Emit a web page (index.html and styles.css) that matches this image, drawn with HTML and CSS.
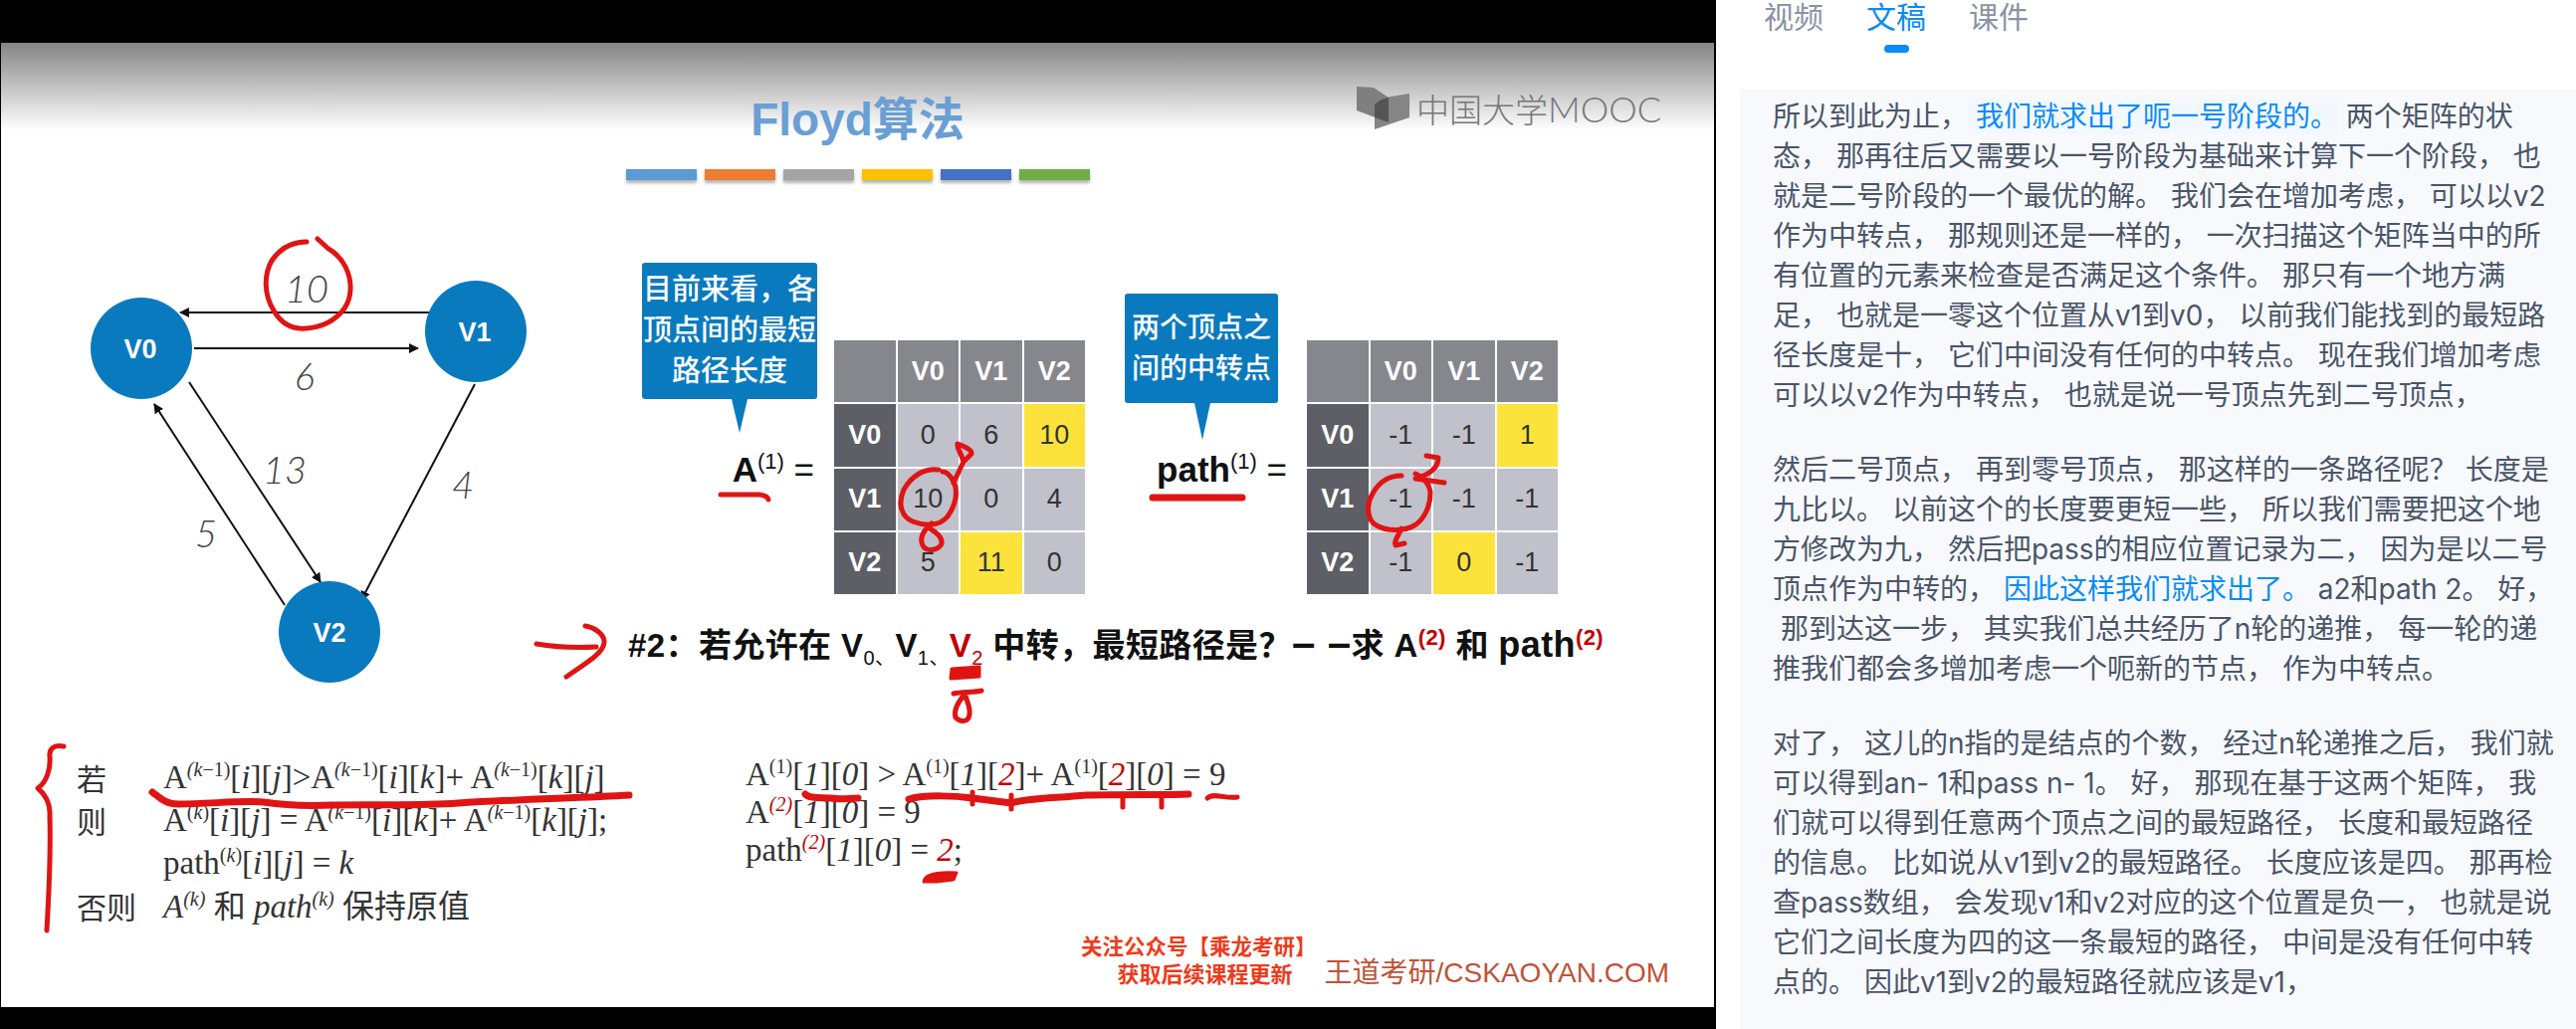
FILE: index.html
```html
<!DOCTYPE html>
<html lang="zh-CN">
<head>
    <meta charset="UTF-8">
    <title>Floyd算法 - 文稿</title>
    <link rel="stylesheet" href="styles.css">
</head>
<body>
<div class="page">
    <div class="video">
        <div class="slide">
            <h1 class="slide-title">Floyd算法</h1>
            <div class="color-bars">
                <span class="bar bar-blue"></span>
                <span class="bar bar-orange"></span>
                <span class="bar bar-gray"></span>
                <span class="bar bar-yellow"></span>
                <span class="bar bar-navy"></span>
                <span class="bar bar-green"></span>
            </div>

            <div class="mooc-logo">
                <svg width="54" height="44" viewBox="0 0 54 44">
                    <path d="M0 0 L17 1 L32 11 L32 36 L0 24 Z" fill="#7f7f7f"/>
                    <path d="M18 18 Q24 11 34 10 L53 7 L53 31 L18 43 Z" fill="#858585"/>
                    <path d="M18 18 Q24 12 32 11 L32 36 L18 31 Z" fill="#555"/>
                </svg>
                <span class="mooc-text">中国大学<span class="mooc-latin">MOOC</span></span>
            </div>

            <div class="main-row">
                <svg class="graph" width="546" height="430" viewBox="85 264 546 430">
                    <defs>
                        <marker id="head" markerWidth="10" markerHeight="10" refX="9" refY="5" orient="auto" markerUnits="userSpaceOnUse">
                            <path d="M0 0 L10 5 L0 10 Z" fill="#111"/>
                        </marker>
                    </defs>
                    <line class="edge" x1="433" y1="314" x2="181" y2="314" marker-end="url(#head)"/>
                    <line class="edge" x1="195" y1="350" x2="420" y2="350" marker-end="url(#head)"/>
                    <line class="edge" x1="190" y1="384" x2="322" y2="585" marker-end="url(#head)"/>
                    <line class="edge" x1="286" y1="608" x2="155" y2="406" marker-end="url(#head)"/>
                    <line class="edge" x1="477" y1="386" x2="363" y2="603" marker-end="url(#head)"/>
                    <circle class="node" cx="142" cy="350" r="51"/>
                    <circle class="node" cx="478" cy="333" r="51"/>
                    <circle class="node" cx="331" cy="635" r="51"/>
                    <text class="node-name" x="141" y="360">V0</text>
                    <text class="node-name" x="477" y="343">V1</text>
                    <text class="node-name" x="331" y="645">V2</text>
                    <text class="weight" x="308" y="304">10</text>
                    <text class="weight" x="306" y="392">6</text>
                    <text class="weight" x="286" y="486">13</text>
                    <text class="weight" x="465" y="501">4</text>
                    <text class="weight" x="207" y="550">5</text>
                </svg>

                <div class="right-col">
                    <div class="matrices">
                        <div class="matrix-block block-a">
                            <div class="lhs">
                                <div class="callout callout-a">目前来看&#65292;各<br>顶点间的最短<br>路径长度</div>
                                <div class="lhs-label"><b>A</b><sup>(1)</sup> =</div>
                            </div>
                            <div class="matrix">
                                <div class="cell head"></div><div class="cell head">V0</div><div class="cell head">V1</div><div class="cell head">V2</div>
                                <div class="cell side">V0</div><div class="cell">0</div><div class="cell">6</div><div class="cell hot">10</div>
                                <div class="cell side">V1</div><div class="cell">10</div><div class="cell">0</div><div class="cell">4</div>
                                <div class="cell side">V2</div><div class="cell">5</div><div class="cell hot">11</div><div class="cell">0</div>
                            </div>
                        </div>
                        <div class="matrix-block block-path">
                            <div class="lhs">
                                <div class="callout callout-path">两个顶点之<br>间的中转点</div>
                                <div class="lhs-label"><b>path</b><sup>(1)</sup> =</div>
                            </div>
                            <div class="matrix">
                                <div class="cell head"></div><div class="cell head">V0</div><div class="cell head">V1</div><div class="cell head">V2</div>
                                <div class="cell side">V0</div><div class="cell">-1</div><div class="cell">-1</div><div class="cell hot">1</div>
                                <div class="cell side">V1</div><div class="cell">-1</div><div class="cell">-1</div><div class="cell">-1</div>
                                <div class="cell side">V2</div><div class="cell">-1</div><div class="cell hot">0</div><div class="cell">-1</div>
                            </div>
                        </div>
                    </div>
                    <p class="question">#2&#65306;若允许在 V<sub>0</sub><sub>、</sub>V<sub>1</sub><sub>、</sub><span class="dark-red">V<sub>2</sub></span> 中转&#65292;最短路径是&#65311;<span class="dash">– –</span>求 A<sup class="dark-red">(2)</sup> 和 <span class="q-path">path</span><sup class="dark-red">(2)</sup></p>
                </div>
            </div>

            <div class="formula-row">
                <div class="rules">
                    <span class="rule-key">若</span>
                    <span class="formula">A<sup><i>(k</i>−1)</sup>[<i>i</i>][<i>j</i>]&gt;A<sup><i>(k</i>−1)</sup>[<i>i</i>][<i>k</i>]+ A<sup><i>(k</i>−1)</sup>[<i>k</i>][<i>j</i>]</span>
                    <span class="rule-key">则</span>
                    <span class="formula">A<sup>(<i>k</i>)</sup>[<i>i</i>][<i>j</i>] = A<sup><i>(k</i>−1)</sup>[<i>i</i>][<i>k</i>]+ A<sup><i>(k</i>−1)</sup>[<i>k</i>][<i>j</i>];</span>
                    <span class="rule-key"></span>
                    <span class="formula">path<sup>(<i>k</i>)</sup>[<i>i</i>][<i>j</i>] = <i>k</i></span>
                    <span class="rule-key">否则</span>
                    <span class="formula"><i>A<sup>(k)</sup></i> <span class="cjk">和</span> <i>path<sup>(k)</sup></i> <span class="cjk">保持原值</span></span>
                </div>
                <div class="example">
                    <div class="formula">A<sup>(1)</sup>[<i>1</i>][<i>0</i>] &gt; A<sup>(1)</sup>[<i>1</i>][<i class="dark-red">2</i>]+ A<sup>(1)</sup>[<i class="dark-red">2</i>][<i>0</i>] = 9</div>
                    <div class="formula">A<sup class="dark-red"><i>(2)</i></sup>[<i>1</i>][<i>0</i>] = 9</div>
                    <div class="formula">path<sup class="dark-red"><i>(2)</i></sup>[<i>1</i>][<i>0</i>] = <i class="dark-red">2</i>;</div>
                </div>
            </div>

            <div class="credits">
                <div class="follow">
                    <span class="follow-one">关注公众号【乘龙考研】</span>
                    <span class="follow-two">获取后续课程更新</span>
                </div>
                <div class="site">王道考研/CSKAOYAN.COM</div>
            </div>

            <!-- teacher's pen marks on top of the slide -->
            <svg class="ink" width="1722" height="969" viewBox="0 43 1722 969">
                <path d="M307 243 C292 243 280 250 272 262 C264 276 264 296 274 312 C282 326 294 331 306 330 C322 329 336 322 345 310 C353 298 353 282 346 268 C340 256 332 252 329 250 L318 240"/>
                <path d="M723 497 L762 497 Q770 498 771 502"/>
                <path d="M1157 500 L1247 500" class="thick"/>
                <path d="M942 472 C928 470 915 478 907 492 C900 508 906 520 916 524 C926 528 942 530 951 519 C959 508 962 494 957 484 C954 478 950 474 946 474"/>
                <path d="M935 526 C928 532 922 540 926 548 C930 556 944 552 945 546 C946 540 938 534 933 531"/>
                <path d="M957 485 L967 464 C965 456 960 450 961 446 C967 448 976 452 975 456 L967 464"/>
                <path d="M1407 478 C1394 478 1384 485 1378 496 C1370 510 1374 524 1382 528 C1392 534 1410 534 1420 528 C1430 522 1436 508 1436 496 C1436 488 1430 480 1421 476"/>
                <path d="M1407 531 C1404 538 1399 544 1401 548 L1410 546"/>
                <path d="M1432 458 L1444 460 C1444 468 1438 476 1421 481 L1450 485"/>
                <path d="M538 647 C555 650 580 651 598 650"/>
                <path d="M587 629 C598 631 606 638 606 645 C606 655 592 664 568 680"/>
                <path d="M955 672 L983 670 L983 680 L954 682 Z" class="blob"/>
                <path d="M957 697 C965 695 978 696 985 694 M968 698 C961 706 957 714 959 721 C964 726 972 726 973 718 C974 710 970 704 969 699"/>
                <path d="M63 750 C54 748 48 752 49 760 C50 772 46 786 37 792 C44 798 50 806 49 820 C50 850 48 900 46 935"/>
                <path d="M152 796 C160 802 166 808 178 808 C210 808 240 804 264 806 C290 810 310 810 333 809 C370 808 420 810 459 807 C520 803 580 802 631 799" class="thick"/>
                <path d="M808 798 C812 803 826 801 834 802 C844 804 852 802 861 802" class="thick"/>
                <path d="M912 803 C930 798 960 800 976 802 L1015 807 C1030 802 1060 802 1090 799 C1130 798 1170 799 1193 798" class="thick"/>
                <path d="M976 796 L976 808 M1015 799 L1015 813 M1127 800 L1127 811 M1166 800 L1166 811"/>
                <path d="M1212 802 C1218 796 1230 803 1242 801"/>
                <path d="M927 886 C928 878 942 876 960 877 L957 884 L940 886 Z" class="blob"/>
            </svg>
        </div>
    </div>

    <div class="side-panel">
        <div class="tabs">
            <div class="tab">视频</div>
            <div class="tab active">文稿</div>
            <div class="tab">课件</div>
        </div>
        <div class="transcript">
            <p>所以到此为止&#65292;<span class="hl"> 我们就求出了呃一号阶段的。</span> 两个矩阵的状态&#65292; 那再往后又需要以一号阶段为基础来计算下一个阶段&#65292; 也就是二号阶段的一个最优的解。 我们会在增加考虑&#65292; 可以以v2作为中转点&#65292; 那规则还是一样的&#65292; 一次扫描这个矩阵当中的所有位置的元素来检查是否满足这个条件。 那只有一个地方满足&#65292; 也就是一零这个位置从v1到v0&#65292; 以前我们能找到的最短路径长度是十&#65292; 它们中间没有任何的中转点。 现在我们增加考虑可以以v2作为中转点&#65292; 也就是说一号顶点先到二号顶点&#65292;</p>
            <p>然后二号顶点&#65292; 再到零号顶点&#65292; 那这样的一条路径呢&#65311; 长度是九比以。 以前这个的长度要更短一些&#65292; 所以我们需要把这个地方修改为九&#65292; 然后把pass的相应位置记录为二&#65292; 因为是以二号顶点作为中转的&#65292; <span class="link">因此这样我们就求出了。</span> a2和path 2。 好&#65292;<br>&nbsp;那到达这一步&#65292; 其实我们总共经历了n轮的递推&#65292; 每一轮的递推我们都会多增加考虑一个呃新的节点&#65292; 作为中转点。</p>
            <p>对了&#65292; 这儿的n指的是结点的个数&#65292; 经过n轮递推之后&#65292; 我们就可以得到an- 1和pass n- 1。 好&#65292; 那现在基于这两个矩阵&#65292; 我们就可以得到任意两个顶点之间的最短路径&#65292; 长度和最短路径的信息。 比如说从v1到v2的最短路径。 长度应该是四。 那再检查pass数组&#65292; 会发现v1和v2对应的这个位置是负一&#65292; 也就是说它们之间长度为四的这一条最短的路径&#65292; 中间是没有任何中转点的。 因此v1到v2的最短路径就应该是v1&#65292;</p>
        </div>
    </div>
</div>
</body>
</html>
```

FILE: styles.css
```css
* {
    box-sizing: border-box;
}

body {
    margin: 0;
    background: #fff;
    font-family: "Liberation Sans", "Noto Sans CJK SC", sans-serif;
}

.page {
    display: flex;
    width: 2588px;
    height: 1034px;
    overflow: hidden;
}

/* video area */
.video {
    width: 1724px;
    flex-shrink: 0;
    background: #000;
    padding: 43px 2px 22px 1px;
}

.slide {
    position: relative;
    height: 969px;
    background: linear-gradient(#858585, #fff 88px);
}

.slide-title {
    width: fit-content;
    margin: 0 auto;
    padding-top: 47px;
    font-size: 46px;
    line-height: 60px;
    font-weight: 700;
    color: #6a9fd4;
}

.color-bars {
    display: flex;
    justify-content: center;
    gap: 8px;
    margin-top: 20px;
}

.bar {
    width: 71px;
    height: 11px;
    box-shadow: 0 3px 3px rgba(0, 0, 0, 0.3);
}

.bar-blue { background: #5b9bd5; }
.bar-orange { background: #ed7d31; }
.bar-gray { background: #a5a5a5; }
.bar-yellow { background: #ffc000; }
.bar-navy { background: #4472c4; }
.bar-green { background: #70ad47; }

.mooc-logo {
    position: absolute;
    top: 44px;
    left: 1362px;
    display: flex;
    align-items: center;
    gap: 6px;
}

.mooc-text {
    font-family: "Noto Sans CJK SC", sans-serif;
    font-size: 33px;
    line-height: 44px;
    font-weight: 300;
    color: #777;
    white-space: nowrap;
}

.mooc-latin {
    font-family: Lato, sans-serif;
    font-size: 36px;
}

.main-row {
    display: flex;
    margin-top: 83px;
    padding-left: 84px;
}

.graph {
    flex-shrink: 0;
    overflow: visible;
}

.edge {
    stroke: #111;
    stroke-width: 2;
}

.node {
    fill: #0a7abf;
}

.node-name {
    font-size: 27px;
    font-weight: 700;
    fill: #fff;
    text-anchor: middle;
}

.weight {
    font-family: Lato, sans-serif;
    font-size: 38px;
    font-style: italic;
    font-weight: 300;
    fill: #444;
    text-anchor: middle;
}

.right-col {
    display: flex;
    flex-direction: column;
}

.matrices {
    display: flex;
    gap: 40px;
    padding-left: 14px;
}

.matrix-block {
    display: flex;
    height: 333px;
}

.block-a {
    gap: 17px;
}

.block-path {
    gap: 20px;
}

.lhs {
    display: flex;
    flex-direction: column;
    align-items: flex-end;
    padding-bottom: 105px;
}

.block-a .lhs {
    width: 176px;
}

.block-path .lhs {
    width: 163px;
    padding-top: 31px;
}

.callout {
    position: relative;
    align-self: flex-start;
    background: #0a7abf;
    border-radius: 3px;
    color: #fff;
    text-align: center;
    font-weight: 500;
    line-height: 41px;
    white-space: nowrap;
}

.callout::after {
    content: "";
    position: absolute;
    top: 100%;
    border-style: solid;
    border-color: #0a7abf transparent transparent transparent;
}

.callout-a {
    width: 176px;
    padding: 7px 0;
    font-size: 29px;
}

.callout-a::after {
    left: 90px;
    border-width: 34px 8px 0 8px;
}

.callout-path {
    width: 154px;
    padding: 14px 0;
    font-size: 28px;
}

.callout-path::after {
    left: 70px;
    border-width: 37px 8px 0 8px;
}

.lhs-label {
    margin-top: auto;
    font-size: 35px;
    line-height: 40px;
    color: #111;
}

.block-a .lhs-label {
    margin-right: 3px;
}

.lhs-label sup {
    font-size: 22px;
    line-height: 0;
}

.matrix {
    display: grid;
    grid-template-columns: repeat(4, 1fr);
    grid-template-rows: repeat(4, 1fr);
    gap: 2px;
    width: 252px;
    height: 255px;
    margin-top: 78px;
}

.cell {
    display: flex;
    align-items: center;
    justify-content: center;
    background: #c0c1ca;
    color: #333;
    font-size: 27px;
}

.cell.head {
    background: #85878c;
    color: #fff;
    font-weight: 700;
}

.cell.side {
    background: #5e5f66;
    color: #fff;
    font-weight: 700;
}

.cell.hot {
    background: #fbe33b;
}

.question {
    margin: 32px 0 0;
    font-size: 33px;
    line-height: 40px;
    font-weight: 700;
    letter-spacing: 0.4px;
    color: #111;
    white-space: nowrap;
}

.question sub {
    font-size: 20px;
    line-height: 0;
    font-weight: 400;
}

.question sup {
    font-size: 22px;
    line-height: 0;
}

.dash {
    font-size: 42px;
    line-height: 0;
}

.q-path {
    font-size: 36px;
    line-height: 0;
}

.dark-red {
    color: #c00000;
}

.formula-row {
    display: flex;
    margin-top: 65px;
    padding-left: 76px;
}

.rules {
    display: grid;
    grid-template-columns: 87px auto;
    grid-auto-rows: 43px;
    align-items: center;
    width: 672px;
}

.rule-key,
.cjk {
    font-family: "Noto Sans CJK SC", sans-serif;
    color: #333;
}

.rule-key {
    font-size: 30px;
}

.cjk {
    font-size: 32px;
    font-style: normal;
}

.formula {
    font-family: "Liberation Serif", serif;
    font-size: 33px;
    line-height: 38px;
    color: #333;
    white-space: nowrap;
}

.formula sup {
    font-size: 20px;
    line-height: 0;
}

.credits {
    position: absolute;
    right: 45px;
    bottom: 18px;
    display: flex;
    align-items: flex-end;
    gap: 32px;
}

.follow {
    display: flex;
    flex-direction: column;
    align-items: flex-end;
    font-weight: 700;
    color: #ee3a1a;
    line-height: 28px;
}

.follow-one {
    font-size: 21.5px;
    margin-right: -24px;
}

.follow-two {
    font-size: 22px;
}

.site {
    font-size: 28px;
    line-height: 32px;
    color: #bf5238;
}

.ink {
    position: absolute;
    top: 0;
    left: 0;
    pointer-events: none;
}

.ink path {
    fill: none;
    stroke: #e01414;
    stroke-width: 5;
    stroke-linecap: round;
    stroke-linejoin: round;
}

.ink .thick {
    stroke-width: 7;
}

.ink .blob {
    fill: #e01414;
    stroke-width: 3;
}

/* right side */
.side-panel {
    flex: 1;
    display: flex;
    flex-direction: column;
    min-width: 0;
}

.tabs {
    display: flex;
    gap: 43px;
    padding-left: 48px;
    height: 53px;
}

.tab {
    font-size: 30px;
    line-height: 36px;
    color: #8a93a3;
    display: flex;
    flex-direction: column;
    align-items: center;
}

.tab.active {
    color: #0a8cf5;
}

.tab.active::after {
    content: "";
    width: 25px;
    height: 8px;
    margin-top: 9px;
    border-radius: 4px;
    background: #0a8cf5;
}

.transcript {
    flex: 1;
    margin: 37px 0 0 24px;
    padding: 7px 20px 0 33px;
    background: #f7f9fd;
    font-family: Inter, "Noto Sans CJK SC", sans-serif;
    font-size: 28px;
    line-height: 40px;
    color: #4a5568;
}

.transcript p {
    margin: 0 0 35px;
}

.hl {
    padding: 1px 0;
    color: #0a8cf5;
    background: #f3f8fe;
}

.link {
    color: #0a8cf5;
}
```
